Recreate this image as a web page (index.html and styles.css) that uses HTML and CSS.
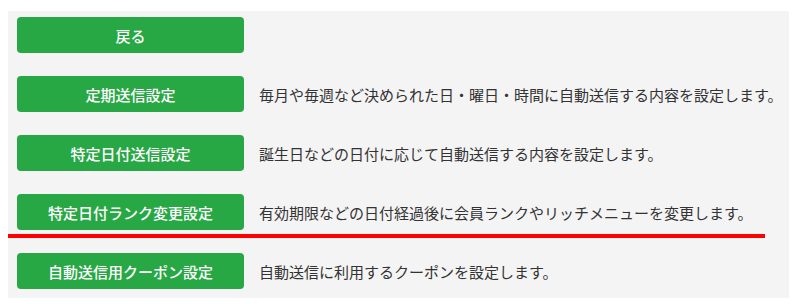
FILE: index.html
```html
<!DOCTYPE html>
<html lang="ja">
<head>
    <meta charset="UTF-8">
    <meta name="viewport" content="width=device-width, initial-scale=1.0">
    <title>自動送信設定</title>
    <link rel="stylesheet" href="styles.css">
</head>
<body>
    <div class="panel">
        <div class="row">
            <a class="btn" href="#">戻る</a>
        </div>
        <div class="row">
            <a class="btn" href="#">定期送信設定</a>
            <p class="desc">毎月や毎週など決められた日・曜日・時間に自動送信する内容を設定します。</p>
        </div>
        <div class="row">
            <a class="btn" href="#">特定日付送信設定</a>
            <p class="desc">誕生日などの日付に応じて自動送信する内容を設定します。</p>
        </div>
        <div class="row last">
            <a class="btn" href="#">特定日付ランク変更設定</a>
            <p class="desc">有効期限などの日付経過後に会員ランクやリッチメニューを変更します。</p>
        </div>
        <hr class="divider">
        <div class="row">
            <a class="btn" href="#">自動送信用クーポン設定</a>
            <p class="desc">自動送信に利用するクーポンを設定します。</p>
        </div>
    </div>
</body>
</html>
```

FILE: styles.css
```css
body {
    font-family: "Noto Sans CJK JP", "Noto Sans", sans-serif;
    margin: 0;
    padding: 0;
    background-color: #fff;
    color: #333;
}
.panel {
    margin: 11px 11px 0 8px;
    padding: 6px 9px 9px;
    background-color: #f4f4f4;
}
.row {
    display: flex;
    align-items: center;
    margin-bottom: 23px;
}
.row:last-child {
    margin-bottom: 0;
}
.row.last {
    margin-bottom: 4px;
}
.btn {
    flex: none;
    width: 227px;
    height: 36px;
    display: flex;
    align-items: center;
    justify-content: center;
    background-color: #28a745;
    color: white;
    font-size: 15px;
    font-weight: 500;
    text-decoration: none;
    border-radius: 4px;
}
.desc {
    margin: 0 0 0 15px;
    font-size: 15px;
    white-space: nowrap;
}
.divider {
    margin: 0 0 15px -9px;
    width: 757px;
    height: 4px;
    border: none;
    background-color: #f00;
}
```
